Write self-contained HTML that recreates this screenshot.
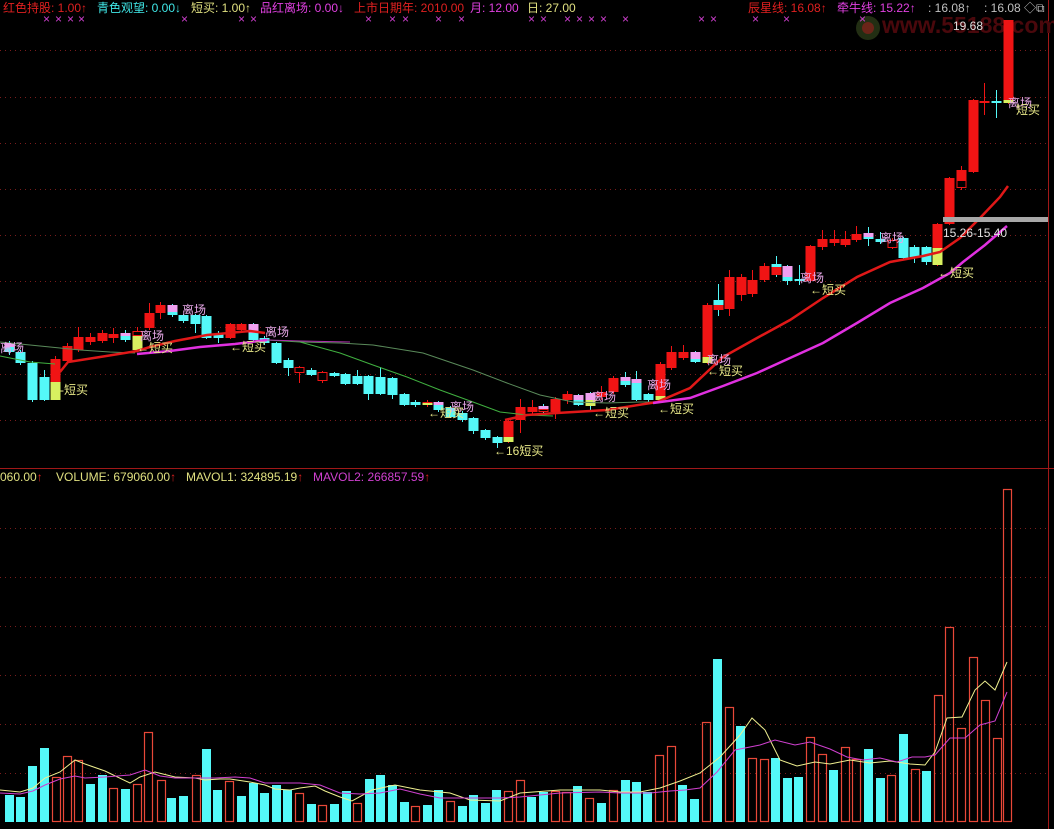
<!DOCTYPE html>
<html><head><meta charset="utf-8">
<style>
html,body{margin:0;padding:0;background:#000;width:1054px;height:829px;overflow:hidden}
svg{display:block}
text{font-family:"Liberation Sans","Noto Sans CJK SC",sans-serif;font-size:12px}
</style></head><body>
<svg id="s" width="1054" height="829" viewBox="0 0 1054 829" xmlns="http://www.w3.org/2000/svg">
<rect width="1054" height="829" fill="#000"/>
<g id="grid" stroke="#7a1c1c" stroke-width="1" stroke-dasharray="1,4"></g>
<line x1="0" y1="468.5" x2="1054" y2="468.5" stroke="#a01818"/>
<line x1="1048.5" y1="0" x2="1048.5" y2="829" stroke="#a01818"/>
<!-- watermark -->
<text x="882" y="33" fill="#4a080c" style="font-size:23px;font-weight:bold">www.55188.com</text>
<circle cx="868" cy="28" r="12" fill="#2a3a18" opacity="0.8"/>
<circle cx="868" cy="28" r="6" fill="#6a2418"/>
<!-- header -->
<text x="3" y="12" fill="#e02020">红色持股: 1.00↑</text>
<text x="97" y="12" fill="#40e8e8">青色观望: 0.00↓</text>
<text x="191" y="12" fill="#e0e080">短买: 1.00↑</text>
<text x="260" y="12" fill="#e040e0">品红离场: 0.00↓</text>
<text x="354" y="12" fill="#e02020">上市日期年: 2010.00</text>
<text x="470" y="12" fill="#e040e0">月: 12.00</text>
<text x="527" y="12" fill="#e0e080">日: 27.00</text>
<text x="748" y="12" fill="#e02020">辰星线: 16.08↑</text>
<text x="837" y="12" fill="#e040e0">牵牛线: 15.22↑</text>
<text x="928" y="12" fill="#c0c0c0">: 16.08↑</text>
<text x="984" y="12" fill="#c0c0c0">: 16.08 ◇⧉</text>
<g id="marks" fill="#d040d0" style="font-size:9px"></g>
<g id="vol"></g>
<g id="cand"></g>
<!-- lines -->
<polyline fill="none" stroke="#5a8a5a" stroke-width="1" points="0,342 40,346 80,350 110,352 135,353"/>
<polyline fill="none" stroke="#40b040" stroke-width="1" points="0,356 30,362 55,364"/>
<polyline fill="none" stroke="#5a8a5a" stroke-width="1" points="300,342 340,343 373,345 423,353 473,370 507,383 540,395 573,402 607,403 640,402 660,402"/>
<polyline fill="none" stroke="#40b040" stroke-width="1" points="267,340 300,342 340,353 373,365 407,377 440,390 473,402 500,412 527,415 553,416"/>
<polyline fill="none" stroke="#b030b0" stroke-width="1" points="267,340 300,341 350,342"/>
<polyline fill="none" stroke="#e01818" stroke-width="2.5" points="60,372 68,362 100,357 137,351 150,347 175,341 207,335 250,331 265,333"/>
<polyline fill="none" stroke="#e030e0" stroke-width="2.5" points="137,354 170,351 200,347 235,344 267,340"/>
<polyline fill="none" stroke="#e01818" stroke-width="2.5" points="505,420 527,415 557,413 607,410 657,402 690,388 723,357 757,338 790,320 823,298 857,277 890,262 923,256 940,252 960,238 980,218 1000,197 1008,186"/>
<polyline fill="none" stroke="#e030e0" stroke-width="2.5" points="653,403 690,398 723,386 757,373 790,358 823,343 857,323 890,303 923,288 950,273 963,262 985,245 1007,226"/>
<rect x="943" y="217" width="105" height="5" fill="#a8a8a8"/>
<text x="953" y="30" fill="#e0e0e0">19.68</text>
<text x="943" y="237" fill="#e0e0e0">15.26-15.40</text>
<!-- labels -->
<g fill="#e8a8e8" style="font-size:13px">
<text x="0" y="352">离场</text><text x="140" y="340">离场</text><text x="182" y="314">离场</text>
<text x="265" y="336">离场</text><text x="450" y="411">离场</text><text x="592" y="401">离场</text>
<text x="647" y="389">离场</text><text x="707" y="364">离场</text><text x="800" y="282">离场</text>
<text x="880" y="242">离场</text><text x="1008" y="107">离场</text></g>
<g fill="#e8e888" style="font-size:13px">
<text x="60" y="394">-短买</text><text x="137" y="352">←短买</text><text x="230" y="351">←短买</text>
<text x="428" y="417">←短买</text><text x="494" y="455">←16短买</text><text x="593" y="417">←短买</text>
<text x="658" y="413">←短买</text><text x="707" y="375">←短买</text><text x="810" y="294">←短买</text>
<text x="938" y="277">←短买</text><text x="1016" y="114">短买</text></g>
<!-- volume header -->
<text x="0" y="481" fill="#e0e080">060.00<tspan fill="#e02020">↑</tspan></text>
<text x="56" y="481" fill="#e0e080">VOLUME: 679060.00<tspan fill="#e02020">↑</tspan></text>
<text x="186" y="481" fill="#e0e080">MAVOL1: 324895.19<tspan fill="#e02020">↑</tspan></text>
<text x="313" y="481" fill="#d040d0">MAVOL2: 266857.59<tspan fill="#e02020">↑</tspan></text>
<polyline fill="none" stroke="#f0f090" stroke-width="1" points="0,790 20,792 33,788 45,778 60,772 75,760 85,764 105,771 130,783 140,777 155,772 175,777 195,778 205,780 220,779 230,779 250,782 265,785 275,789 290,790 300,788 315,786 325,791 340,797 352,801 372,790 395,785 420,790 450,793 470,800 500,801 520,793 560,790 600,790 620,792 640,792 660,788 680,781 700,773 720,757 740,735 752,718 765,730 780,760 797,766 815,762 830,764 850,760 870,763 890,761 910,764 925,765 935,752 947,718 962,717 975,690 985,681 995,690 1007,662"/>
<polyline fill="none" stroke="#d040d0" stroke-width="1" points="0,793 20,794 33,791 45,785 60,779 75,776 85,778 105,777 130,775 145,770 160,776 175,778 195,778 215,778 235,777 250,778 265,783 285,783 300,783 320,785 340,793 360,794 380,793 400,789 420,794 440,798 470,798 500,798 520,797 560,793 600,792 620,793 640,793 650,793 670,791 685,790 700,788 717,772 735,750 760,745 775,740 795,745 810,742 830,749 847,757 863,760 880,758 897,762 912,757 925,757 935,755 950,738 965,738 980,725 995,721 1007,692"/>
</svg>
<script>
var NS="http://www.w3.org/2000/svg";
function el(p,t,a){var e=document.createElementNS(NS,t);for(var k in a)e.setAttribute(k,a[k]);p.appendChild(e);return e;}
var g=document.getElementById('grid');
[50,97,143,189,235,281,327,374,420,528,577,626,675,724,773].forEach(function(y){el(g,'line',{x1:0,y1:y+.5,x2:1048,y2:y+.5});});
var mk=document.getElementById('marks');
[46,58,70,81,184,241,253,368,392,405,438,461,531,543,567,579,591,603,625,701,713,755,786,862].forEach(function(x){var t=el(mk,'text',{x:x-3,y:23});t.textContent='×';});
var R='#f01414',C='#54f8f8',P='#f0a0f0',Y='#d8f060';
var V=[[5,795,'C'],[16,797,'C'],[28,766,'C'],[40,748,'C'],[52,777,'R'],[63,756,'R'],[74,760,'R'],[86,784,'C'],[98,775,'C'],[109,788,'R'],[121,789,'C'],[133,784,'R'],[144,732,'R'],[157,780,'R'],[167,798,'C'],[179,796,'C'],[192,775,'R'],[202,749,'C'],[213,790,'C'],[225,781,'R'],[237,796,'C'],[249,783,'C'],[260,793,'C'],[272,785,'C'],[283,790,'C'],[295,793,'R'],[307,804,'C'],[318,805,'R'],[330,804,'C'],[342,791,'C'],[353,803,'R'],[365,779,'C'],[376,775,'C'],[388,785,'C'],[400,802,'C'],[411,806,'R'],[423,805,'C'],[434,790,'C'],[446,801,'R'],[458,806,'C'],[469,795,'C'],[481,803,'C'],[492,790,'C'],[504,791,'R'],[516,780,'R'],[527,797,'C'],[539,792,'C'],[551,791,'R'],[562,792,'R'],[573,786,'C'],[585,798,'R'],[597,803,'C'],[609,790,'R'],[621,780,'C'],[632,782,'C'],[643,792,'C'],[655,755,'R'],[667,746,'R'],[678,785,'C'],[690,799,'C'],[702,722,'R'],[713,659,'C'],[725,707,'R'],[736,726,'C'],[748,758,'R'],[760,759,'R'],[771,758,'C'],[783,778,'C'],[794,777,'C'],[806,737,'R'],[818,754,'R'],[829,770,'C'],[841,747,'R'],[852,759,'R'],[864,749,'C'],[876,778,'C'],[887,775,'R'],[899,734,'C'],[911,769,'R'],[922,771,'C'],[934,695,'R'],[945,627,'R'],[957,728,'R'],[969,657,'R'],[981,700,'R'],[993,738,'R'],[1003,489,'R']];
var vg=document.getElementById('vol');
V.forEach(function(v){var b=822;if(v[2]=='C')el(vg,'rect',{x:v[0],y:v[1],width:9,height:b-v[1],fill:C});else el(vg,'rect',{x:v[0]+.5,y:v[1]+.5,width:8,height:b-v[1]-1,fill:'none',stroke:'#e84838','stroke-width':1.2});});
var K=[[9,343,352,341,355,'PC',347],[20,352,363,350,365,'C'],[32,363,400,361,402,'C'],[44,377,400,370,401,'C'],[55,359,400,356,400,'RY',382],[67,346,361,343,364,'R'],[78,337,350,327,352,'R'],[90,337,342,333,345,'R'],[102,333,341,330,343,'R'],[113,334,338,328,343,'R'],[125,333,340,330,342,'PC',336],[137,331,350,327,350,'HY',336],[149,313,328,303,330,'R'],[160,305,313,302,319,'R'],[172,305,315,304,317,'PC',312],[183,315,321,314,323,'C'],[195,315,324,314,333,'C'],[206,316,338,315,339,'C'],[218,334,338,331,343,'C'],[230,324,338,323,339,'R'],[241,324,330,323,332,'R'],[253,324,340,323,341,'PC',333],[264,338,343,336,345,'C'],[276,343,363,342,364,'C'],[288,360,368,358,376,'C'],[299,367,373,366,383,'H'],[311,370,375,368,376,'C'],[322,372,381,371,383,'H'],[334,373,376,372,377,'C'],[345,374,384,373,385,'C'],[357,376,384,370,385,'C'],[368,376,394,375,400,'C'],[380,377,394,367,395,'C'],[392,378,395,377,399,'C'],[404,394,405,393,406,'C'],[415,402,405,400,407,'C'],[427,402,405,400,407,'RY',403],[438,402,410,401,412,'PC',405],[450,408,417,406,418,'C'],[462,413,420,411,422,'C'],[473,418,431,417,434,'C'],[485,430,438,429,440,'C'],[497,437,443,436,448,'C'],[508,421,442,420,443,'RY',437],[520,407,420,399,433,'R'],[532,407,412,400,414,'R'],[543,406,412,404,414,'PH',409],[555,399,412,397,419,'R'],[567,394,400,391,404,'R'],[578,395,405,394,406,'PC',400],[590,393,406,392,410,'PY',400],[601,392,397,386,400,'R'],[613,378,392,376,394,'R'],[625,377,385,372,387,'PC',381],[636,379,400,371,401,'PC',383],[648,394,400,393,402,'C'],[660,364,400,362,401,'RY',396],[671,352,368,346,370,'R'],[683,352,358,345,360,'R'],[695,352,362,351,363,'PC',359],[707,305,363,303,364,'RY',357],[718,300,310,284,316,'CR',305],[729,277,309,270,316,'R'],[741,277,295,274,301,'R'],[752,280,294,270,297,'R'],[764,266,280,263,282,'R'],[776,264,275,256,277,'CR',267],[787,266,281,265,285,'PC',277],[799,279,281,265,285,'C'],[810,246,281,245,282,'R'],[822,239,247,230,250,'R'],[834,239,243,230,246,'R'],[845,239,245,231,247,'R'],[856,234,240,226,242,'R'],[868,233,239,227,246,'PC',237],[880,239,242,232,244,'C'],[892,240,248,238,249,'H'],[903,238,258,237,260,'C'],[914,247,257,245,263,'C'],[926,247,262,246,265,'C'],[937,224,265,223,266,'RY',248],[949,178,224,177,225,'R'],[961,170,188,166,190,'RH',180],[973,100,172,99,173,'R'],[984,101,103,83,115,'R'],[996,101,103,90,118,'C'],[1008,20,103,20,104,'RY',100]];
var cg=document.getElementById('cand');
K.forEach(function(k){var x=k[0],t=k[1],b=k[2],ty=k[5],sp=k[6];
 var wc=ty[0]=='C'?C:(ty[0]=='P'?C:R);
 el(cg,'line',{x1:x+.5,y1:k[3],x2:x+.5,y2:k[4],stroke:wc});
 function col(c){return c=='R'?R:c=='C'?C:c=='P'?P:c=='Y'?Y:null;}
 function part(c,y1,y2){if(y2-y1<1)y2=y1+1.5;if(c=='H')el(cg,'rect',{x:x-4,y:y1+.5,width:9,height:y2-y1-1,fill:'#000',stroke:R});else el(cg,'rect',{x:x-4.5,y:y1,width:10,height:y2-y1,fill:col(c)});}
 if(ty.length==1)part(ty,t,b);else{part(ty[0],t,sp);part(ty[1],sp,b);}
});
</script>
</body></html>
